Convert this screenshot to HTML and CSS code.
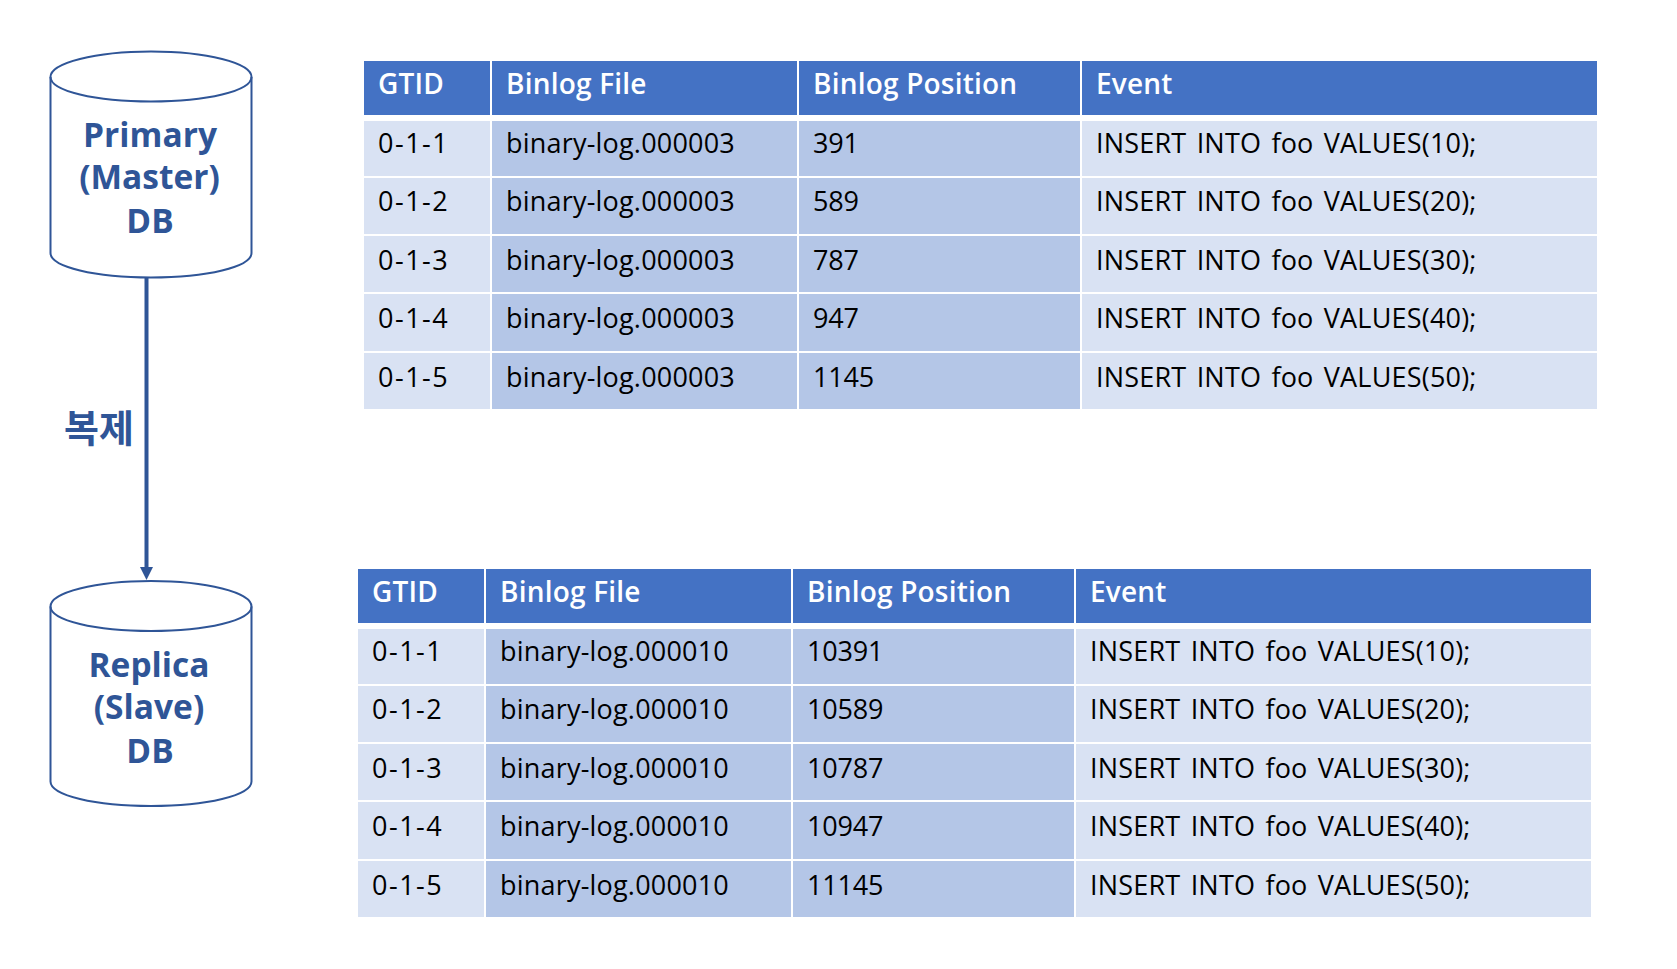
FILE: index.html
```html
<!DOCTYPE html>
<html lang="ko">
<head>
<meta charset="utf-8">
<title>GTID replication</title>
<link rel="stylesheet" href="styles.css">
</head>
<body>
<main class="page">
  <svg class="diagram" width="300" height="969" viewBox="0 0 300 969">
    <g class="cyl">
      <path d="M50.500 77 C50.500 63 95.500 51.500 151 51.500 C206.500 51.500 251.500 63 251.500 77 V253 C251.500 267 206.500 277.500 151 277.500 C95.500 277.500 50.500 267 50.500 253 Z"/>
      <path d="M50.500 77 C50.500 91 95.500 101.500 151 101.500 C206.500 101.500 251.500 91 251.500 77"/>
    </g>
    <g class="cyl">
      <path d="M50.500 606.500 C50.500 592.500 95.500 581 151 581 C206.500 581 251.500 592.500 251.500 606.500 V781.500 C251.500 795.500 206.500 806 151 806 C95.500 806 50.500 795.500 50.500 781.500 Z"/>
      <path d="M50.500 606.500 C50.500 620.500 95.500 631 151 631 C206.500 631 251.500 620.500 251.500 606.500"/>
    </g>
    <rect class="shaft" x="144.500" y="278" width="4" height="290"/>
    <path class="shaft" d="M140 567 H153 L146.500 580 Z"/>
    <text class="label" x="150" y="147">Primary</text>
    <text class="label" x="149.500" y="189">(Master)</text>
    <text class="label" x="150" y="233">DB</text>
    <text class="label" x="149" y="677">Replica</text>
    <text class="label" x="149" y="719">(Slave)</text>
    <text class="label" x="150" y="763">DB</text>
    <text class="label label-ko" x="99" y="442">복제</text>
  </svg>

  <div class="tables">
    <div class="gtid gtid-first">
      <div class="cell head">GTID</div><div class="cell head">Binlog File</div><div class="cell head">Binlog Position</div><div class="cell head">Event</div>
      <div class="cell light id">0-1-1</div><div class="cell mid file">binary-log.000003</div><div class="cell mid pos">391</div><div class="cell light event">INSERT INTO foo VALUES(10);</div>
      <div class="cell light id">0-1-2</div><div class="cell mid file">binary-log.000003</div><div class="cell mid pos">589</div><div class="cell light event">INSERT INTO foo VALUES(20);</div>
      <div class="cell light id">0-1-3</div><div class="cell mid file">binary-log.000003</div><div class="cell mid pos">787</div><div class="cell light event">INSERT INTO foo VALUES(30);</div>
      <div class="cell light id">0-1-4</div><div class="cell mid file">binary-log.000003</div><div class="cell mid pos">947</div><div class="cell light event">INSERT INTO foo VALUES(40);</div>
      <div class="cell light id">0-1-5</div><div class="cell mid file">binary-log.000003</div><div class="cell mid pos">1145</div><div class="cell light event">INSERT INTO foo VALUES(50);</div>
    </div>
    <div class="gtid gtid-second">
      <div class="cell head">GTID</div><div class="cell head">Binlog File</div><div class="cell head">Binlog Position</div><div class="cell head">Event</div>
      <div class="cell light id">0-1-1</div><div class="cell mid file">binary-log.000010</div><div class="cell mid pos">10391</div><div class="cell light event">INSERT INTO foo VALUES(10);</div>
      <div class="cell light id">0-1-2</div><div class="cell mid file">binary-log.000010</div><div class="cell mid pos">10589</div><div class="cell light event">INSERT INTO foo VALUES(20);</div>
      <div class="cell light id">0-1-3</div><div class="cell mid file">binary-log.000010</div><div class="cell mid pos">10787</div><div class="cell light event">INSERT INTO foo VALUES(30);</div>
      <div class="cell light id">0-1-4</div><div class="cell mid file">binary-log.000010</div><div class="cell mid pos">10947</div><div class="cell light event">INSERT INTO foo VALUES(40);</div>
      <div class="cell light id">0-1-5</div><div class="cell mid file">binary-log.000010</div><div class="cell mid pos">11145</div><div class="cell light event">INSERT INTO foo VALUES(50);</div>
    </div>
  </div>
</main>
</body>
</html>
```
FILE: styles.css
```css
html, body {
  margin: 0;
  padding: 0;
  background: #fff;
  overflow: hidden;
}
.page {
  display: flex;
  width: 1677px;
  height: 969px;
  font-family: "Open Sans", "Noto Sans", "Noto Sans CJK KR", sans-serif;
}
.diagram {
  flex: none;
  display: block;
}
.cyl path {
  fill: none;
  stroke: #2f5597;
  stroke-width: 2;
}
.shaft {
  fill: #2f5597;
}
.label {
  fill: #2f5597;
  font-size: 33.500px;
  font-weight: 700;
  text-anchor: middle;
  font-family: "Open Sans", "Noto Sans CJK KR", sans-serif;
}
.label-ko {
  font-size: 38px;
  font-weight: 700;
  font-family: "Noto Sans CJK KR", sans-serif;
}
.tables {
  display: flex;
  flex-direction: column;
  padding-left: 58px;
}
.gtid {
  display: grid;
  grid-template-columns: 126px 305px 281px 515px;
  grid-template-rows: 58px 55px 56px 56px 57px 56px;
  column-gap: 2px;
  row-gap: 2px;
}
.gtid-first {
  margin-top: 61px;
  margin-left: 6px;
}
.gtid-second {
  margin-top: 160px;
}
.gtid > .cell:nth-child(-n+4) {
  margin-bottom: 4px;
}
.gtid > .cell:nth-child(n+9) {
  padding-top: 1px;
}
.gtid > .cell:nth-child(n+13) {
  padding-top: 2px;
}
.cell {
  padding: 0 0 0 14px;
  font-size: 27px;
  line-height: 44px;
  color: #000;
  white-space: nowrap;
}
.head {
  background: #4472c4;
  color: #fff;
  font-size: 28px;
  font-weight: 600;
  line-height: 45px;
  letter-spacing: 0.2px;
}
.light {
  background: #d9e2f3;
}
.mid {
  background: #b4c6e7;
}
.id {
  letter-spacing: 1.5px;
}
.file {
  letter-spacing: 0.2px;
}
.pos {
  letter-spacing: -0.2px;
}
.event {
  letter-spacing: 0.2px;
  word-spacing: 3px;
}
```
